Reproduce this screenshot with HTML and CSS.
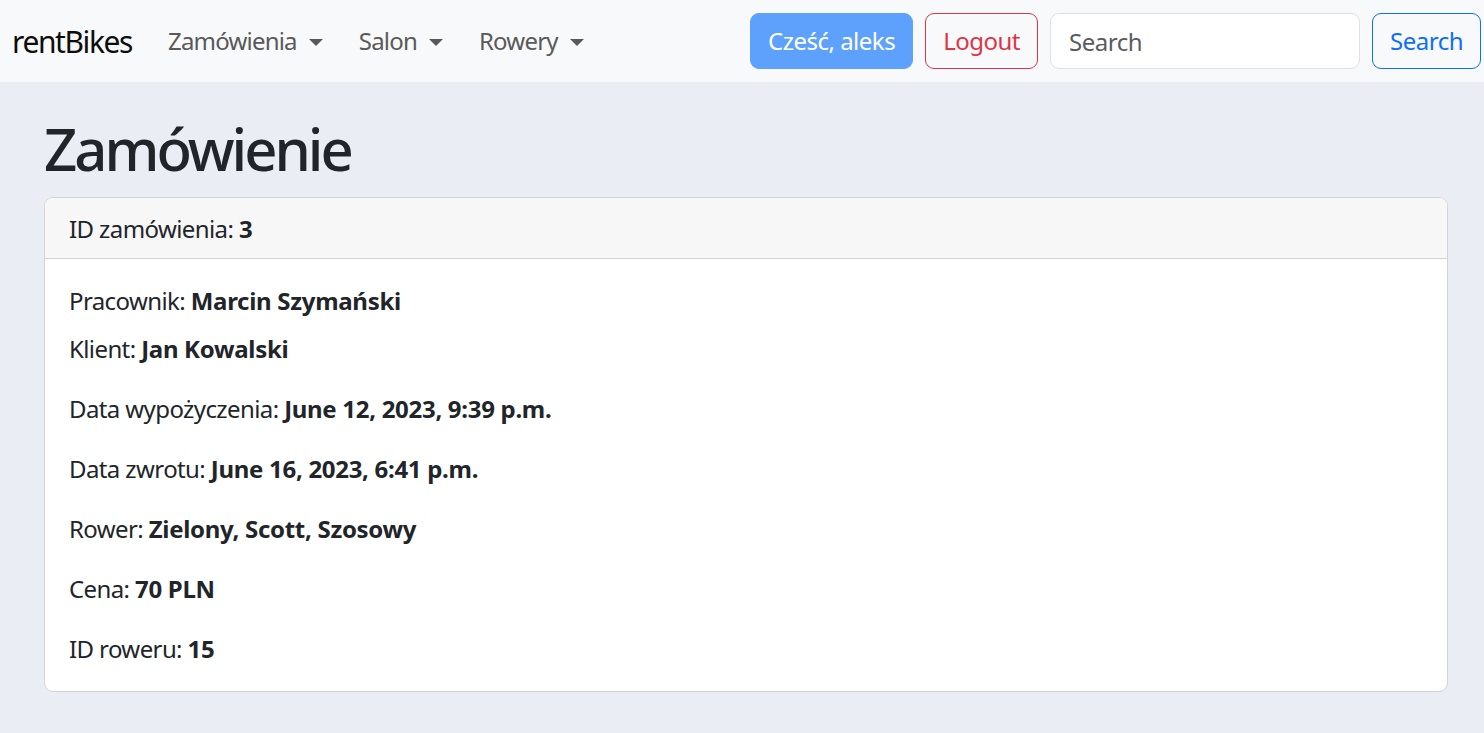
FILE: index.html
```html
<!DOCTYPE html>
<html lang="pl">
<head>
<meta charset="utf-8">
<title>rentBikes</title>
<link rel="stylesheet" href="styles.css">
</head>
<body>
<nav class="navbar">
  <a class="brand" href="#">rentBikes</a>
  <ul class="nav">
    <li><a class="nav-link dropdown-toggle" href="#">Zamówienia</a></li>
    <li><a class="nav-link dropdown-toggle" href="#">Salon</a></li>
    <li><a class="nav-link dropdown-toggle" href="#">Rowery</a></li>
  </ul>
  <div class="nav-right">
    <span class="btn btn-primary-disabled">Cześć, aleks</span>
    <a class="btn btn-outline-danger" href="#">Logout</a>
    <form class="search-form">
      <input class="form-control" type="search" placeholder="Search">
      <button class="btn btn-outline-primary" type="button">Search</button>
    </form>
  </div>
</nav>
<main class="container">
  <h1 class="title">Zamówienie</h1>
  <div class="card">
    <div class="card-header">ID zamówienia: <b>3</b></div>
    <div class="card-body">
      <p class="line tight">Pracownik: <b>Marcin Szymański</b></p>
      <p class="line">Klient: <b>Jan Kowalski</b></p>
      <p class="line">Data wypożyczenia: <b>June 12, 2023, 9:39 p.m.</b></p>
      <p class="line">Data zwrotu: <b>June 16, 2023, 6:41 p.m.</b></p>
      <p class="line">Rower: <b>Zielony, Scott, Szosowy</b></p>
      <p class="line">Cena: <b>70 PLN</b></p>
      <p class="line last">ID roweru: <b>15</b></p>
    </div>
  </div>
</main>
</body>
</html>
```

FILE: styles.css
```css
* { box-sizing: border-box; }
html, body { margin: 0; padding: 0; }
body {
  font-family: "Noto Sans", "Open Sans", sans-serif;
  font-size: 24px;
  line-height: 1.5;
  color: #212529;
  background: #eaedf4;
}
a { text-decoration: none; }

.navbar {
  display: flex;
  align-items: center;
  height: 82px;
  padding: 0 3px 0 12px;
  background: #f8f9fa;
}
.brand {
  font-size: 30px;
  letter-spacing: -1.4px;
  color: #0d0d0d;
  margin-right: 24px;
  line-height: 1.5;
}
.nav {
  display: flex;
  gap: 12px;
  list-style: none;
  margin: 0;
  padding: 0;
}
.nav-link {
  display: block;
  padding: 12px;
  color: #595959;
  letter-spacing: -0.8px;
}
.dropdown-toggle::after {
  content: "";
  display: inline-block;
  margin-left: 12px;
  vertical-align: 4px;
  border-top: 7px solid #595959;
  border-left: 7px solid transparent;
  border-right: 7px solid transparent;
}
.nav-right {
  margin-left: auto;
  display: flex;
  align-items: center;
  gap: 12px;
}
.search-form {
  display: flex;
  gap: 12px;
  margin: 0;
}
.btn {
  display: inline-block;
  height: 56px;
  padding: 9px 17px;
  font-family: inherit;
  font-size: 24px;
  line-height: 36px;
  letter-spacing: -0.5px;
  border: 1px solid transparent;
  border-radius: 9px;
  background: transparent;
  cursor: pointer;
}
.btn-primary-disabled {
  background: #5ea1fc;
  border-color: #5ea1fc;
  color: #fff;
}
.btn-outline-danger {
  color: #dc3545;
  border-color: #dc3545;
}
.btn-outline-primary {
  color: #0d6efd;
  border-color: #0d6efd;
}
.form-control {
  width: 310px;
  height: 56px;
  padding: 9px 18px;
  font-family: inherit;
  font-size: 24px;
  line-height: 36px;
  letter-spacing: -0.5px;
  color: #212529;
  background: #fff;
  border: 1px solid #dee2e6;
  border-radius: 9px;
  outline: none;
}
.form-control::placeholder { color: #595c5f; }

.container {
  padding: 31px 36px 24px 44px;
}
.title {
  margin: 0 0 12px;
  font-size: 58px;
  font-weight: 500;
  letter-spacing: -3px;
  line-height: 72px;
}
.card {
  background: #fff;
  border: 1px solid #d3d4d5;
  border-radius: 9px;
  overflow: hidden;
}
.card-header {
  padding: 13px 24px 11px;
  background: #f7f7f7;
  border-bottom: 1px solid #d3d4d5;
  letter-spacing: -0.6px;
}
.card-body {
  padding: 24px;
  letter-spacing: -0.6px;
}
.line { margin: 0 0 24px; }
.line.tight { margin-bottom: 12px; }
.line.last { margin-bottom: 0; }
b { font-weight: 700; letter-spacing: -0.3px; }
```
